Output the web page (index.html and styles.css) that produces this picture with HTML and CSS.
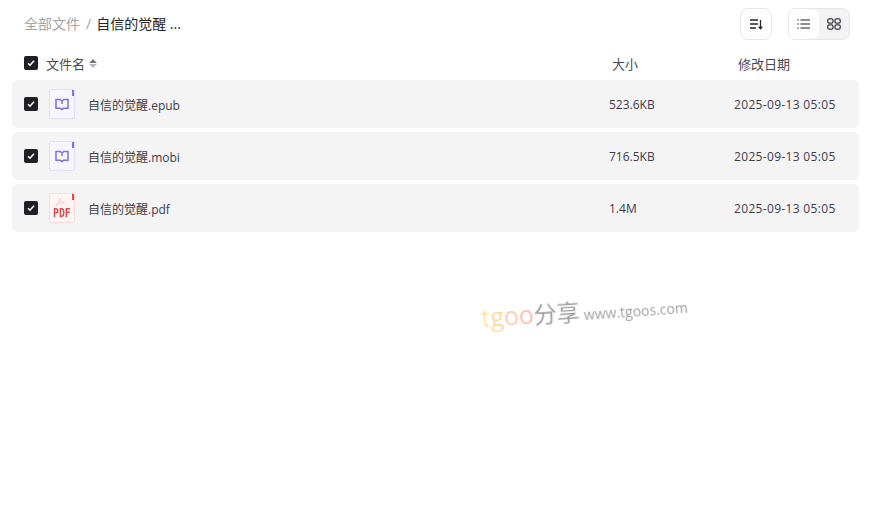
FILE: index.html
```html
<!DOCTYPE html>
<html lang="zh-CN">
<head>
    <meta charset="UTF-8">
    <title>全部文件</title>
    <link rel="stylesheet" href="styles.css">
</head>
<body>
    <div class="page">
        <div class="toolbar">
            <div class="crumbs">
                <span class="crumb-root">全部文件</span>
                <span class="crumb-sep">/</span>
                <span class="crumb-current">自信的觉醒 ...</span>
            </div>
            <div class="tools">
                <button class="tool-btn">
                    <svg width="14" height="14" viewBox="0 0 14 14" fill="none" stroke="#26262e" stroke-width="1.3">
                        <path d="M1 3h8M1 7h8M1 11h6M11.5 3v8.500M9.800 9.800l1.700 1.900 1.700-1.900"/>
                    </svg>
                </button>
                <div class="view-switch">
                    <span class="view-item view-active">
                        <svg width="14" height="14" viewBox="0 0 14 14" fill="none" stroke="#1f1f26" stroke-width="1.200">
                            <path d="M3.500 3H13M3.500 7H13M3.500 11H13M.5 3h1.400M.5 7h1.400M.5 11h1.400"/>
                        </svg>
                    </span>
                    <span class="view-item">
                        <svg width="14" height="14" viewBox="0 0 14 14" fill="none" stroke="#3a3a42" stroke-width="1.300">
                            <rect x=".8" y="1.800" width="5.200" height="4.400" rx="1.400"/>
                            <rect x="8" y="1.800" width="5.200" height="4.400" rx="1.400"/>
                            <rect x=".8" y="7.800" width="5.200" height="4.400" rx="1.400"/>
                            <rect x="8" y="7.800" width="5.200" height="4.400" rx="1.400"/>
                        </svg>
                    </span>
                </div>
            </div>
        </div>

        <div class="list-head">
            <span class="check"><svg width="8" height="8" viewBox="0 0 8 8" fill="none" stroke="#fff" stroke-width="1.600"><path d="M1 4.200l2 2 4-4.400"/></svg></span>
            <span class="head-name">文件名</span>
            <span class="sort"><i class="sort-up"></i><i class="sort-down"></i></span>
            <span class="head-size">大小</span>
            <span class="head-date">修改日期</span>
        </div>

        <div class="file-row">
            <span class="check"><svg width="8" height="8" viewBox="0 0 8 8" fill="none" stroke="#fff" stroke-width="1.600"><path d="M1 4.200l2 2 4-4.400"/></svg></span>
            <span class="file-icon icon-book">
                <i class="corner"></i>
                <svg width="14" height="13" viewBox="0 0 14 13" fill="none" stroke="#7c72e8" stroke-width="1.500"><path d="M1 1.500h4.200L7 3l1.800-1.500H13v8.800H8.500L7 11.500l-1.500-1.200H1zM7 3v3"/></svg>
            </span>
            <span class="file-name">自信的觉醒.epub</span>
            <span class="file-size">523.6KB</span>
            <span class="file-date">2025-09-13 05:05</span>
        </div>
        <div class="file-row">
            <span class="check"><svg width="8" height="8" viewBox="0 0 8 8" fill="none" stroke="#fff" stroke-width="1.600"><path d="M1 4.200l2 2 4-4.400"/></svg></span>
            <span class="file-icon icon-book">
                <i class="corner"></i>
                <svg width="14" height="13" viewBox="0 0 14 13" fill="none" stroke="#7c72e8" stroke-width="1.500"><path d="M1 1.500h4.200L7 3l1.800-1.500H13v8.800H8.500L7 11.500l-1.500-1.200H1zM7 3v3"/></svg>
            </span>
            <span class="file-name">自信的觉醒.mobi</span>
            <span class="file-size">716.5KB</span>
            <span class="file-date">2025-09-13 05:05</span>
        </div>
        <div class="file-row">
            <span class="check"><svg width="8" height="8" viewBox="0 0 8 8" fill="none" stroke="#fff" stroke-width="1.600"><path d="M1 4.200l2 2 4-4.400"/></svg></span>
            <span class="file-icon icon-pdf">
                <i class="corner"></i>
                <svg class="pdf-mark" width="12" height="10" viewBox="0 0 12 10" fill="none" stroke="#f8cccc" stroke-width="1"><path d="M6 1c-.6 2 .6 4 4.500 5C7.500 5.500 4 6.500 1.500 9 3.500 7 5.500 4 6 1z"/></svg>
                <span class="pdf-label">PDF</span>
            </span>
            <span class="file-name">自信的觉醒.pdf</span>
            <span class="file-size">1.4M</span>
            <span class="file-date">2025-09-13 05:05</span>
        </div>

        <div class="watermark">
            <span class="wm-t">t</span><span class="wm-g">g</span><span class="wm-o1">o</span><span class="wm-o2">o</span><span class="wm-cn">分享</span>
            <span class="wm-url">www.tgoos.com</span>
        </div>
    </div>
</body>
</html>
```

FILE: styles.css
```css
* {
    box-sizing: border-box;
}

html, body {
    margin: 0;
    height: 100%;
    background: #fff;
    overflow: hidden;
}

body {
    font-family: "Open Sans", "Noto Sans CJK SC", sans-serif;
    color: #3c3c4c;
}

.page {
    position: relative;
    width: 859px;
    height: 514px;
    padding: 8px 0 0 12px;
}

.toolbar {
    display: flex;
    justify-content: space-between;
    align-items: center;
    height: 32px;
    padding: 0 9px 0 12px;
}

.crumbs {
    display: flex;
    align-items: center;
    margin-top: -2px;
    font-size: 14px;
}

.crumb-root {
    color: #a3a3a8;
}

.crumb-sep {
    margin: 0 5px 0 6px;
    color: #a3a3a8;
}

.crumb-current {
    color: #24242e;
}

.tools {
    display: flex;
    gap: 16px;
}

.tool-btn {
    display: flex;
    align-items: center;
    justify-content: center;
    width: 32px;
    height: 32px;
    padding: 0;
    background: #fff;
    border: 1px solid #e6e6e8;
    border-radius: 8px;
}

.view-switch {
    display: flex;
    width: 62px;
    height: 32px;
    background: #f3f3f4;
    border: 1px solid #e6e6e8;
    border-radius: 8px;
    overflow: hidden;
}

.view-item {
    display: flex;
    align-items: center;
    justify-content: center;
    flex: 1;
}

.view-active {
    background: #fff;
    border-radius: 0 8px 8px 0;
}

.list-head {
    display: flex;
    align-items: center;
    height: 40px;
    padding: 6px 0 0 12px;
    font-size: 13px;
    color: #4a4a54;
}

.check {
    display: flex;
    align-items: center;
    justify-content: center;
    flex: none;
    width: 14px;
    height: 14px;
    background: #1f1f26;
    border-radius: 2px;
}

.head-name {
    margin-left: 8px;
}

.sort {
    display: flex;
    flex-direction: column;
    gap: 1px;
    margin-left: 4px;
}

.sort i {
    display: block;
    width: 0;
    height: 0;
    border-left: 4px solid transparent;
    border-right: 4px solid transparent;
}

.sort-up {
    border-bottom: 4.500px solid #77777d;
}

.sort-down {
    border-top: 4.500px solid #b5b5b9;
}

.head-size {
    margin-left: auto;
    width: 126px;
}

.head-date {
    width: 121px;
}

.file-row {
    display: flex;
    align-items: center;
    height: 48px;
    margin-bottom: 4px;
    padding-left: 12px;
    background: #f4f4f5;
    border-radius: 6px;
    font-size: 12px;
}

.file-icon {
    position: relative;
    display: flex;
    flex-direction: column;
    align-items: center;
    justify-content: center;
    flex: none;
    width: 26px;
    height: 30px;
    margin-left: 11px;
    border-radius: 2px;
}

.icon-book {
    background: #f7f5ff;
    border: 1px solid #e2defa;
}

.icon-pdf {
    justify-content: flex-start;
    background: #fff5f5;
    border: 1px solid #fbdada;
}

.corner {
    position: absolute;
    top: 0;
    right: 0;
    width: 2px;
    height: 6px;
}

.icon-book .corner {
    background: #7c72e8;
}

.icon-pdf .corner {
    background: #e5484d;
}

.pdf-mark {
    margin: 3px 4px 0 0;
}

.pdf-label {
    font-family: "DejaVu Sans Mono", monospace;
    font-size: 12px;
    font-weight: 700;
    line-height: 12px;
    color: #e5484d;
    transform: scaleX(0.82);
}

.file-name {
    flex: 1;
    margin: 1px 0 0 13px;
}

.file-size {
    width: 125px;
}

.file-date {
    width: 125px;
    letter-spacing: 0.33px;
}

.watermark {
    position: absolute;
    left: 481px;
    top: 293px;
    display: flex;
    align-items: baseline;
    transform: rotate(-4deg);
    white-space: nowrap;
    filter: blur(0.4px);
}

.wm-t, .wm-g, .wm-o1, .wm-o2 {
    font-size: 25px;
}

.wm-t {
    color: #fde6a8;
}

.wm-g {
    color: #fdd9a0;
}

.wm-o1 {
    color: #fdcdb0;
}

.wm-o2 {
    color: #fcc0b0;
}

.wm-cn {
    font-size: 23px;
    color: #a0a0a0;
}

.wm-url {
    margin-left: 4px;
    font-size: 14px;
    color: #a0a0a0;
}
```
